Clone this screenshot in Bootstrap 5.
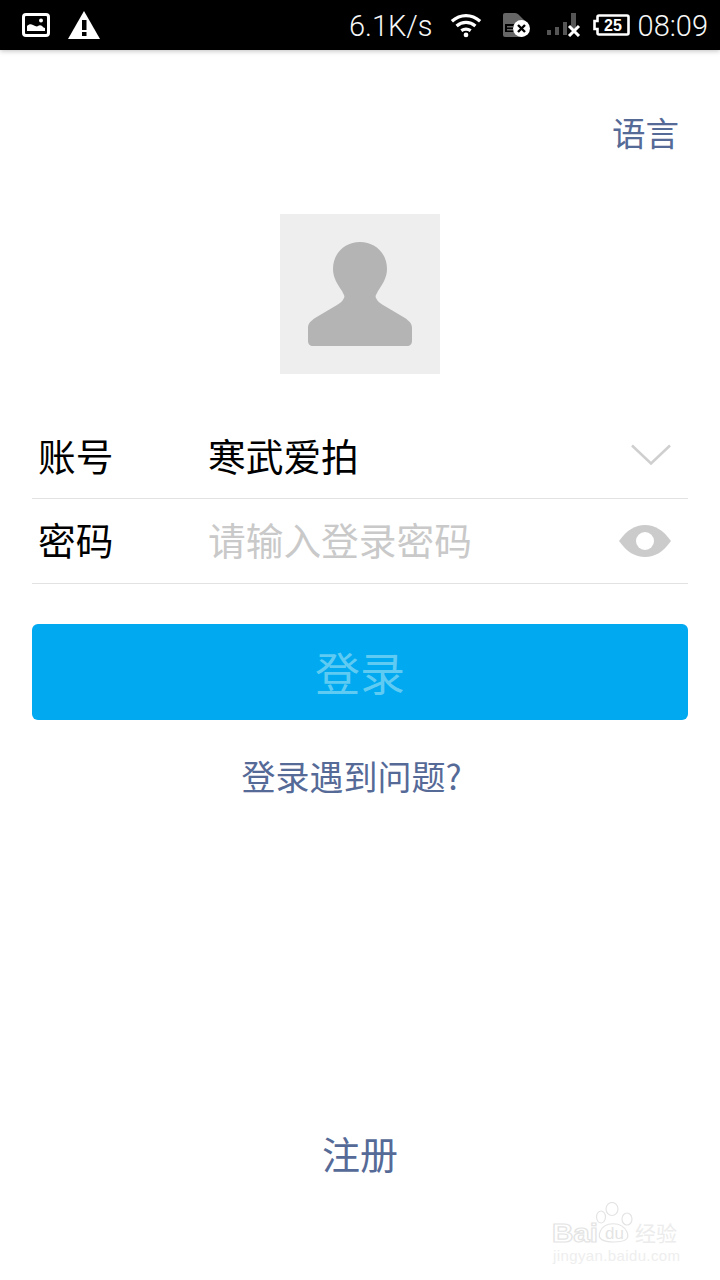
<!DOCTYPE html>
<html lang="zh">
<head>
  <meta charset="UTF-8" />
  <title>登录</title>
  <meta name="viewport" content="width=device-width, initial-scale=1" />
  <link href="https://cdn.jsdelivr.net/npm/bootstrap@5.3.3/dist/css/bootstrap.min.css" rel="stylesheet" />
  <style>
    body { font-family: "Noto Sans CJK SC", sans-serif; background: #fff; width: 720px; height: 1280px; overflow: hidden; position: relative; }
    .status-bar { height: 50px; background: #000; color: #f6f6f6; font-family: Roboto, sans-serif; font-weight: 300; font-size: 29px; padding: 0 12px 0 22px; box-shadow: 0 1px 5px rgba(0,0,0,.25); }
    .status-bar svg { flex: none; }
    .status-bar span { padding-top: 4px; }
    .ic-image { margin-right: 18px; }
    .net-speed { margin-right: 17px; }
    .ic-wifi { margin-right: 20px; }
    .ic-sim { margin-right: 17px; }
    .ic-signal { margin-right: 12px; }
    .ic-batt { margin-right: 8px; }
    .lang-row { height: 164px; padding: 65px 41px 0 0; }
    .link-text { color: #566a97; line-height: 1; }
    .lang-text { font-size: 33.5px; }
    .avatar-box { width: 160px; height: 160px; background: #eeeeee; }
    .form-area { margin: 42px 32px 0; }
    .form-line { height: 85px; border-bottom: 1px solid #e2e2e2; padding: 0 1px 0 6px; font-size: 37.7px; }
    .form-line:first-child { height: 83px; }
    .lift { margin-bottom: 4px; }
    .line-label { width: 170px; color: #000; }
    .line-value { color: #000; }
    .line-hint { color: #c9c9c9; }
    .login-btn { height: 96px; margin: 40px 32px 0; width: 656px; background: #00a9f0; border: 0; border-radius: 6px; color: #5fcbf3; font-size: 45px; line-height: 1; padding: 0 0 2px; }
    .help-text { font-size: 34px; margin-top: 39px; padding-right: 17px; }
    .reg-text { font-size: 38px; margin-top: 341px; }
    .wm { position: absolute; left: 552px; top: 1202px; width: 130px; height: 62px; }
  </style>
</head>
<body>
  <div class="status-bar d-flex align-items-center">
    <svg width="28" height="24" viewBox="0 0 28 24" class="ic-image">
      <rect x="1.5" y="1.5" width="25" height="21" rx="2.5" fill="none" stroke="#fff" stroke-width="3" />
      <path d="M5 18v-5c2-2 4-2 6-1s4 2 5 1 3-1 4 0 2 2 3 2v3z" fill="#fff" />
      <circle cx="19" cy="7.5" r="2" fill="#fff" />
    </svg>
    <svg width="32" height="29" viewBox="0 0 32 29">
      <path d="M16 0L32 28H0z" fill="#fff" />
      <rect x="14" y="9" width="4.5" height="10" fill="#000" />
      <rect x="14" y="21" width="4.5" height="4" fill="#000" />
    </svg>
    <span class="net-speed ms-auto">6.1K/s</span>
    <svg width="32" height="26" viewBox="0 0 34 26" class="ic-wifi" fill="none" stroke="#fff" stroke-width="3.5">
      <path d="M2 9c9-8 21-8 30 0M7 14c6-5 14-5 20 0M12 19c3-2 7-2 10 0" />
      <circle cx="17" cy="23.5" r="2.5" fill="#fff" stroke="none" />
    </svg>
    <svg width="28" height="24" viewBox="0 0 28 24" class="ic-sim">
      <path d="M3 0h10c2 0 3 1 4 2l5 5v15a2 2 0 0 1-2 2H3a2 2 0 0 1-2-2V2a2 2 0 0 1 2-2z" fill="#666" />
      <path d="M3 11h10v8H3zM5 13v1.500h6V13zM5 16v1.500h6V16z" fill="#000" fill-rule="evenodd" />
      <circle cx="19.500" cy="15.500" r="8.500" fill="#fff" />
      <path d="M16 12l7 7m0-7l-7 7" stroke="#000" stroke-width="2.400" />
    </svg>
    <svg width="34" height="24" viewBox="0 0 34 24" class="ic-signal">
      <rect x="0" y="17" width="4" height="5" fill="#555" /><rect x="8" y="14" width="4" height="8" fill="#555" />
      <rect x="16" y="9" width="4" height="13" fill="#555" /><rect x="24" y="0" width="5" height="16" fill="#555" />
      <path d="M22 13l10 10m0-10L22 23" stroke="#fff" stroke-width="3" />
    </svg>
    <svg width="37" height="22" viewBox="0 0 37 22" class="ic-batt">
      <path d="M6 1.500h28a1.500 1.500 0 0 1 1.500 1.500v16a1.500 1.500 0 0 1-1.500 1.500H6a1.500 1.500 0 0 1-1.500-1.500v-4H1.500V7h3V3A1.500 1.500 0 0 1 6 1.500z" fill="none" stroke="#fff" stroke-width="2.600" />
      <text x="20" y="17" text-anchor="middle" fill="#fff" font-family="Liberation Sans" font-weight="700" font-size="16">25</text>
    </svg>
    <span>08:09</span>
  </div>

  <div class="lang-row d-flex justify-content-end"><span class="link-text lang-text">语言</span></div>

  <div class="avatar-box mx-auto d-flex align-items-center justify-content-center">
    <svg width="104" height="104" viewBox="0 0 104 104">
      <path d="M52 0c15 0 27 11 27 27 0 9-5 16-9 22-2 4-3 5-2 7 1 3 4 5 7 7l22 13c4 3 7 5 7 10v13c0 3-2 5-5 5H5c-3 0-5-2-5-5V86c0-5 3-7 7-10l22-13c3-2 6-4 7-7 1-2 0-3-2-7-4-6-9-13-9-22C25 11 37 0 52 0z" fill="#b4b4b4" />
    </svg>
  </div>

  <div class="form-area">
    <div class="form-line d-flex align-items-center">
      <span class="line-label lift">账号</span>
      <span class="line-value lift flex-grow-1">寒武爱拍</span>
      <svg width="40" height="22" viewBox="0 0 40 22" class="me-3 lift" fill="none" stroke="#cfcfcf" stroke-width="2.500"><path d="M1 1.500l19 18 19-18" /></svg>
    </div>
    <div class="form-line d-flex align-items-center">
      <span class="line-label lift">密码</span>
      <span class="line-hint lift flex-grow-1">请输入登录密码</span>
      <svg width="52" height="32" viewBox="0 0 52 32" class="me-3">
        <path d="M0 16C8 5 16 0 26 0s18 5 26 16c-8 11-16 16-26 16S8 27 0 16z" fill="#cbcbcb" />
        <circle cx="26" cy="16" r="9" fill="#fff" />
      </svg>
    </div>
  </div>

  <button type="button" class="login-btn btn d-block">登录</button>

  <div class="link-text help-text text-center">登录遇到问题?</div>
  <div class="link-text reg-text text-center">注册</div>

  <svg class="wm" viewBox="0 0 130 62" fill="none" stroke="#e4e4e4" stroke-width="1.200">
    <ellipse cx="60" cy="7" rx="6" ry="6.500" /><ellipse cx="75" cy="17" rx="5" ry="6" /><ellipse cx="49" cy="15" rx="4.500" ry="6" />
    <path d="M48 30c4-11 22-11 27 0 3 7-2 10-13 10s-17-3-14-10z" />
    <text x="0" y="40" font-family="Liberation Sans" font-weight="700" font-size="26" textLength="46" lengthAdjust="spacingAndGlyphs" fill="#fff">Bai</text>
    <text x="53" y="37" font-family="Liberation Sans" font-size="17" fill="#e4e4e4" stroke="none">du</text>
    <text x="83" y="39" font-family="Noto Sans CJK SC" font-size="21" fill="#ececec" stroke="none">经验</text>
    <text x="1" y="59" font-family="Liberation Sans" font-size="15" fill="#eeeeee" stroke="none" textLength="127">jingyan.baidu.com</text>
  </svg>

  <script src="https://cdn.jsdelivr.net/npm/bootstrap@5.3.3/dist/js/bootstrap.bundle.min.js"></script>
</body>
</html>
